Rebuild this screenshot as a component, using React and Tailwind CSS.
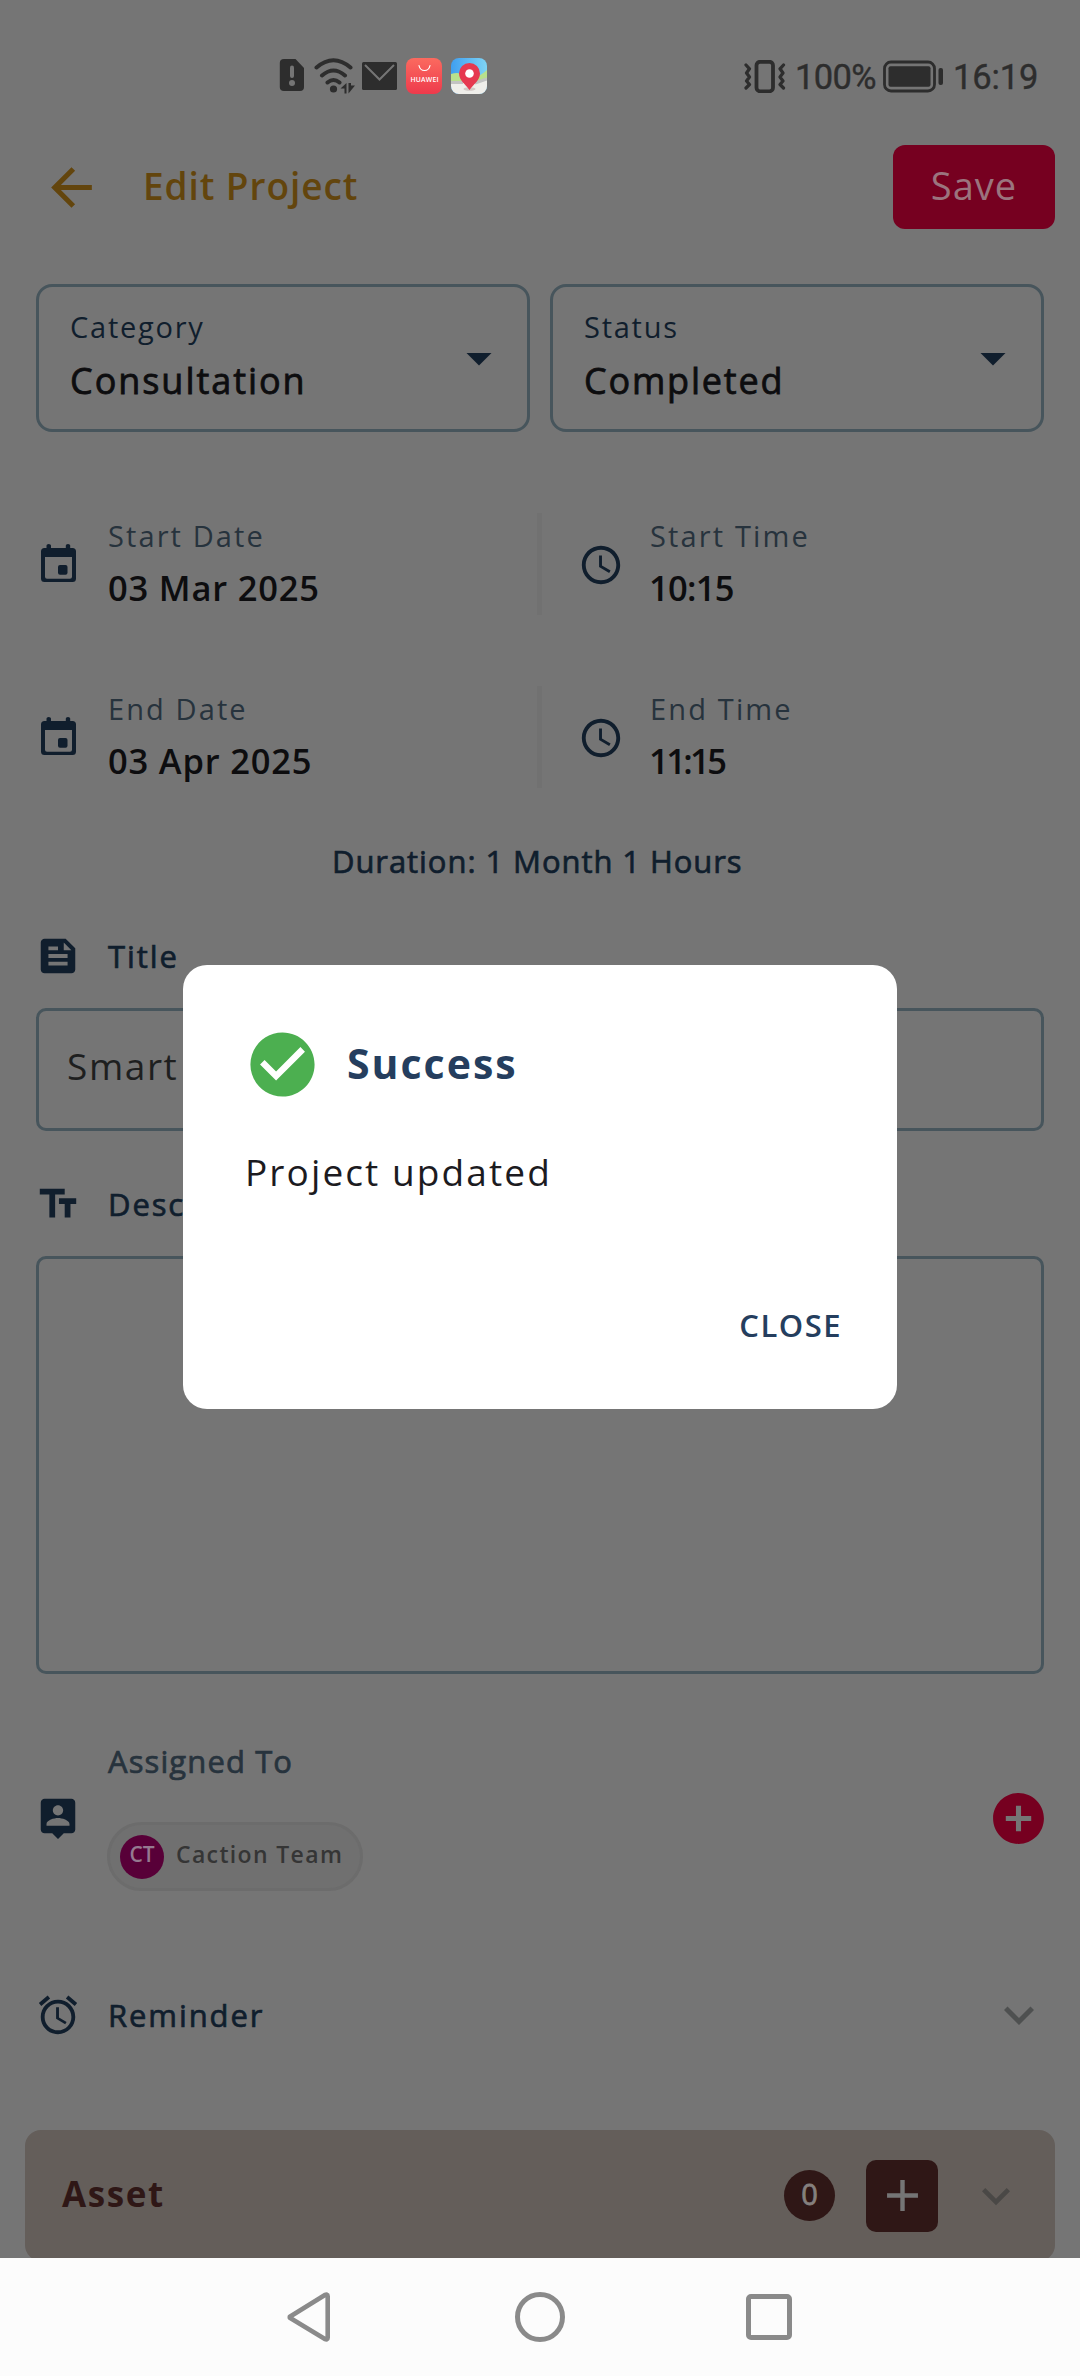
import React from "react";
import {
  MdAccessTime,
  MdAdd,
  MdAddCircle,
  MdAlarm,
  MdArrowBack,
  MdArrowDropDown,
  MdCheckCircle,
  MdExpandMore,
  MdFeed,
  MdTextFields,
} from "react-icons/md";

function CalendarIcon() {
  return (
    <svg className="h-[38px] w-[35px] shrink-0" viewBox="0 0 35 38" fill="#101e2d">
      <path
        fillRule="evenodd"
        d="M5.5 1.6Q5.5 0 7.7 0T10 1.6V4h14.8V1.6Q24.8 0 27 0t2.2 1.6V4h2.3Q35 4 35 7.5v27q0 3.5-3.5 3.5h-28Q0 38 0 34.5v-27Q0 4 3.5 4h2zM4 13v19.7q0 2 2 2h23q2 0 2-2V13z"
      />
      <rect x="17" y="21" width="9.5" height="9.7" rx="2" />
    </svg>
  );
}

function PersonPinIcon() {
  return (
    <svg className="mt-[54px] size-[46px] shrink-0" viewBox="0 0 24 24" fill="#101e2d">
      <path d="M19 2H5c-1.11 0-2 .9-2 2v14c0 1.1.89 2 2 2h4l3 3 3-3h4c1.1 0 2-.9 2-2V4c0-1.1-.9-2-2-2zm-7 3.3c1.49 0 2.7 1.21 2.7 2.7s-1.21 2.7-2.7 2.7S9.3 9.49 9.3 8s1.21-2.7 2.7-2.7zM18 16H6v-.9c0-2 4-3.1 6-3.1s6 1.1 6 3.1v.9z" />
    </svg>
  );
}

function StatusBar() {
  return (
    <div className="flex h-[130px] items-start pt-[56px] text-[#2d2d2d]">
      <svg className="ml-[279px] mt-[3px] h-[33px] w-[26px]" viewBox="0 0 26 33" fill="#2d2d2d">
        <path d="M5 0h11.5l8.5 9v19q0 4-4 4H5q-4.2 0-4.2-4V4Q.8 0 5 0z" />
        <path d="M13 8.5v8.5" stroke="#757575" strokeWidth="4" strokeLinecap="round" />
        <circle cx="13" cy="24" r="3" fill="#757575" />
      </svg>
      <svg className="ml-[9px] mt-[2px] h-[36px] w-[42px]" viewBox="0 0 42 36" fill="none" stroke="#2d2d2d" strokeWidth="4" strokeLinecap="round">
        <path d="M2.5 9.5Q19.5-5 36.5 9.5M8 17.5q11.5-10 23 0M13.5 24.5q6-5 12 0" />
        <circle cx="19.5" cy="31" r="3.6" fill="#2d2d2d" stroke="none" />
        <path d="M26.5 30.5l6-5.5v10.5h-2V30.5zM34.5 25v10.5l6.5-8h-4V25z" fill="#2d2d2d" stroke="none" />
      </svg>
      <svg className="ml-[6px] mt-[6px] h-[28px] w-[35px]" viewBox="0 0 35 28">
        <rect width="35" height="28" rx="1.5" fill="#2d2d2d" />
        <path d="M3 3l14.5 14.5L32 3" fill="none" stroke="#757575" strokeWidth="2" />
      </svg>
      <svg className="ml-[9px] mt-[2px] h-[36px] w-[36px]" viewBox="0 0 36 36">
        <defs>
          <linearGradient id="store" x1="0" y1="0" x2="0" y2="1">
            <stop offset="0" stopColor="#fb6a5f" />
            <stop offset="1" stopColor="#ee3a4c" />
          </linearGradient>
        </defs>
        <rect width="36" height="36" rx="8" fill="url(#store)" />
        <path d="M13 7.5q1 5 5.5 5T24 7.5" fill="none" stroke="#fff" strokeWidth="1.2" strokeLinecap="round" />
        <text x="4.5" y="24" fill="#fff" fontFamily="Open Sans, sans-serif" fontWeight="600" fontSize="6.8" textLength="28">HUAWEI</text>
      </svg>
      <svg className="ml-[9px] mt-[2px] h-[36px] w-[36px]" viewBox="0 0 36 36">
        <defs>
          <linearGradient id="sky" x1="0" y1="0" x2="1" y2="0">
            <stop offset="0" stopColor="#3f9ff0" />
            <stop offset="1" stopColor="#7fd4f5" />
          </linearGradient>
          <clipPath id="mapClip"><rect width="36" height="36" rx="8" /></clipPath>
        </defs>
        <g clipPath="url(#mapClip)">
          <rect width="36" height="36" fill="url(#sky)" />
          <path d="M0 16q8-3 16 2t20-6v14H0z" fill="#b9e08c" />
          <path d="M0 23q10 0 18 4 9-2 18-5v14H0z" fill="#efeeea" />
          <path d="M0 24.5h12M24 25l12-4" stroke="#c3c3c3" strokeWidth="3" />
          <ellipse cx="18.5" cy="31" rx="6" ry="1.8" fill="#d3c9c6" />
          <path d="M18.5 32C14 26 8 22 8 15.5a10.5 10.5 0 0 1 21 0C29 22 23 26 18.5 32z" fill="#e63950" />
          <circle cx="18.5" cy="15.5" r="4.3" fill="#fff" />
        </g>
      </svg>
      <svg className="ml-[257px] mt-[4px] h-[33px] w-[42px]" viewBox="0 0 42 33" fill="none" stroke="#2d2d2d" strokeLinecap="round" strokeLinejoin="round">
        <rect x="12.5" y="1.8" width="16.5" height="29.5" rx="3.5" strokeWidth="3.8" />
        <path d="M2 5l3.5 3.8L2.5 13 5.5 17l-3 4L5.5 24.5 2 28M39.5 5L36 8.8 39 13 36 17l3 4-3 3.5 3.5 3.5" strokeWidth="3.2" />
      </svg>
      <span className="ml-[9px] mt-[-3px] w-[81px] font-[Roboto] text-[34.5px] leading-[48px] tracking-[-0.6px] [-webkit-text-stroke:0.4px]">100%</span>
      <svg className="ml-[7px] mt-[4px] h-[33px] w-[61px]" viewBox="0 0 61 33">
        <rect x="1.5" y="2" width="50" height="29" rx="6.5" fill="none" stroke="#2d2d2d" strokeWidth="2.8" />
        <rect x="5.5" y="6.3" width="42" height="20.5" rx="2" fill="#2d2d2d" />
        <rect x="55.5" y="8" width="4.5" height="17" rx="2" fill="#2d2d2d" />
      </svg>
      <span className="ml-[9px] mt-[-3px] font-[Roboto] text-[34.5px] leading-[48px] tracking-[-0.1px] [-webkit-text-stroke:0.4px]">16:19</span>
    </div>
  );
}

function Select({ label, value, tracking }) {
  return (
    <div className="flex h-[148px] w-[494px] items-start justify-between rounded-[16px] border-[3px] border-[#47555c] pt-[20px] pl-[31px] pr-[18px]">
      <div>
        <div className="text-[29px] leading-[40px] tracking-[1.75px] text-[#101e2d]">{label}</div>
        <div className={"mt-[10px] text-[36px] leading-[48px] text-[#0d0d0f] [-webkit-text-stroke:0.8px] " + tracking}>{value}</div>
      </div>
      <MdArrowDropDown className="mt-[21px] size-[60px] text-[#101e2d]" />
    </div>
  );
}

function DateTimeRow({ dateLabel, date, timeLabel, time, timeTracking }) {
  return (
    <div className="flex h-[102px] items-start">
      <div className="flex w-[537px] items-start pl-[41px]">
        <div className="mt-[31px]"><CalendarIcon /></div>
        <div className="mt-[3px] ml-[32px]">
          <div className="text-[29px] leading-[40px] tracking-[2.1px] text-[#27333d]">{dateLabel}</div>
          <div className="mt-[8px] text-[34.5px] font-semibold leading-[48px] tracking-[0.8px] text-[#0d0d0f]">{date}</div>
        </div>
      </div>
      <div className="h-full w-[5px] bg-[#717171]" />
      <MdAccessTime className="mt-[29px] ml-[36px] size-[46px] text-[#101e2d]" />
      <div className="mt-[3px] ml-[26px]">
        <div className="text-[29px] leading-[40px] tracking-[2.15px] text-[#27333d]">{timeLabel}</div>
        <div className={"mt-[8px] -ml-[1px] text-[34.5px] font-semibold leading-[48px] text-[#0d0d0f] " + timeTracking}>{time}</div>
      </div>
    </div>
  );
}

function SectionLabel({ icon, children }) {
  return (
    <div className="flex h-[46px] items-center pl-[35px]">
      {icon}
      <span className="-mt-[1px] ml-[27px] text-[31px] leading-[40px] tracking-[1.9px] text-[#101e2d] [-webkit-text-stroke:0.7px]">{children}</span>
    </div>
  );
}

function NavigationBar() {
  return (
    <div className="flex h-[118px] items-center bg-[#fcfcfc] pl-[286px]">
      <svg className="h-[52px] w-[46px]" viewBox="0 0 46 52" fill="none" stroke="#8a8a8a" strokeWidth="4.6" strokeLinejoin="round">
        <path d="M3.8 25.8L38.5 4.2q3.2-1.5 3.2 1v41.6q0 2.5-3.2 1L3.8 26.8z" />
      </svg>
      <div className="ml-[183px] size-[50px] rounded-full border-[5px] border-[#8a8a8a]" />
      <div className="ml-[181px] size-[46px] rounded-[5px] border-[5px] border-[#8a8a8a]" />
    </div>
  );
}

export default function App() {
  return (
    <div className="relative h-[2376px] w-[1080px] overflow-hidden bg-[#757575] font-['Open_Sans',sans-serif]">
      <div className="h-[2258px] overflow-hidden">
        <StatusBar />

        <header className="flex h-[114px] items-center pl-[41px] pr-[25px]">
          <MdArrowBack className="size-[61px] text-[#63450d]" />
          <h1 className="-mt-[3px] ml-[41px] text-[37px] font-semibold leading-[50px] tracking-[0.92px] text-[#63450d]">Edit Project</h1>
          <button className="ml-auto h-[84px] w-[162px] rounded-[12px] bg-[#760020] pb-[4px] text-[38px] leading-[50px] tracking-[1px] text-[#9b747e]">Save</button>
        </header>

        <div className="mt-[40px] flex justify-between px-[36px]">
          <Select label="Category" value="Consultation" tracking="tracking-[1.95px]" />
          <Select label="Status" value="Completed" tracking="tracking-[1.8px]" />
        </div>

        <div className="mt-[81px] flex flex-col gap-[71px]">
          <DateTimeRow dateLabel="Start Date" date="03 Mar 2025" timeLabel="Start Time" time="10:15" timeTracking="tracking-[-0.7px]" />
          <DateTimeRow dateLabel="End Date" date="03 Apr 2025" timeLabel="End Time" time="11:15" timeTracking="tracking-[-2.6px]" />
        </div>

        <div className="mt-[53px] pl-[332px] text-[31px] leading-[40px] tracking-[0.93px] text-[#101e2d] [-webkit-text-stroke:0.7px]">Duration: 1 Month 1 Hours</div>

        <div className="mt-[52px]">
          <SectionLabel icon={<MdFeed className="size-[46px] text-[#101e2d]" />}>Title</SectionLabel>
        </div>
        <div className="mx-[36px] mt-[29px] flex h-[123px] items-center rounded-[10px] border-[3px] border-[#47555c] pl-[28px] pb-[7px] text-[37px] tracking-[1.6px] text-[#1e1f1f]">Smart</div>

        <div className="mt-[50px]">
          <SectionLabel icon={<MdTextFields className="size-[46px] text-[#101e2d]" />}>Desc</SectionLabel>
        </div>
        <div className="mx-[36px] mt-[29px] h-[418px] rounded-[10px] border-[3px] border-[#47555c]" />

        <div className="mt-[67px] flex h-[150px] items-start pl-[35px] pr-[31px]">
          <PersonPinIcon />
          <div className="ml-[26px]">
            <div className="ml-[1px] text-[31px] leading-[40px] tracking-[1.1px] text-[#27333d] [-webkit-text-stroke:0.7px]">Assigned To</div>
            <div className="mt-[41px] flex h-[69px] w-[256px] items-center rounded-full border-[3px] border-[#6c6c6c] bg-[#707070] pl-[10px]">
              <div className="flex size-[44px] items-center justify-center rounded-full bg-[#580038] pb-[5px] text-[21px] font-semibold leading-none text-[#957a90]">CT</div>
              <span className="ml-[12px] -mt-[5px] text-[23px] font-semibold leading-[30px] tracking-[1.35px] text-[#353535]">Caction Team</span>
            </div>
          </div>
          <MdAddCircle className="mt-[47px] ml-auto size-[61px] text-[#760020]" />
        </div>

        <div className="mt-[94px] flex h-[60px] items-center justify-between pr-[31px]">
          <SectionLabel icon={<MdAlarm className="size-[46px] text-[#101e2d]" />}>Reminder</SectionLabel>
          <MdExpandMore className="size-[60px] text-[#4e5050]" />
        </div>

        <div className="mx-[25px] mt-[85px] flex h-[131px] items-center rounded-[16px] bg-[#645e5a] pl-[37px] pr-[31px]">
          <span className="-mt-[3px] text-[35px] font-bold leading-[48px] tracking-[1.6px] text-[#2f1716]">Asset</span>
          <div className="ml-auto flex size-[51px] items-center justify-center rounded-full bg-[#2f1716] pb-[4px] text-[29px] leading-none text-[#85807e] [-webkit-text-stroke:0.8px]">0</div>
          <div className="ml-[31px] flex size-[72px] items-center justify-center rounded-[10px] bg-[#2f1716]">
            <MdAdd className="size-[53px] text-[#757575]" />
          </div>
          <MdExpandMore className="ml-[30px] size-[56px] text-[#4a4846]" />
        </div>
      </div>

      <NavigationBar />

      <div className="absolute top-[965px] left-[183px] flex h-[444px] w-[714px] flex-col rounded-[24px] bg-white">
        <div className="mt-[61px] ml-[61px] flex items-center">
          <MdCheckCircle className="size-[77px] text-[#4caf50]" />
          <h2 className="-mt-[4px] ml-[26px] text-[41px] font-bold leading-[54px] tracking-[2px] text-[#253e5e]">Success</h2>
        </div>
        <p className="mt-[44px] ml-[62px] text-[37px] leading-[50px] tracking-[2.1px] text-[#1c1b1f]">Project updated</p>
        <button className="mt-[108px] mr-[55px] self-end text-[31px] font-semibold leading-[40px] tracking-[1.5px] text-[#253e5e]">CLOSE</button>
      </div>
    </div>
  );
}
